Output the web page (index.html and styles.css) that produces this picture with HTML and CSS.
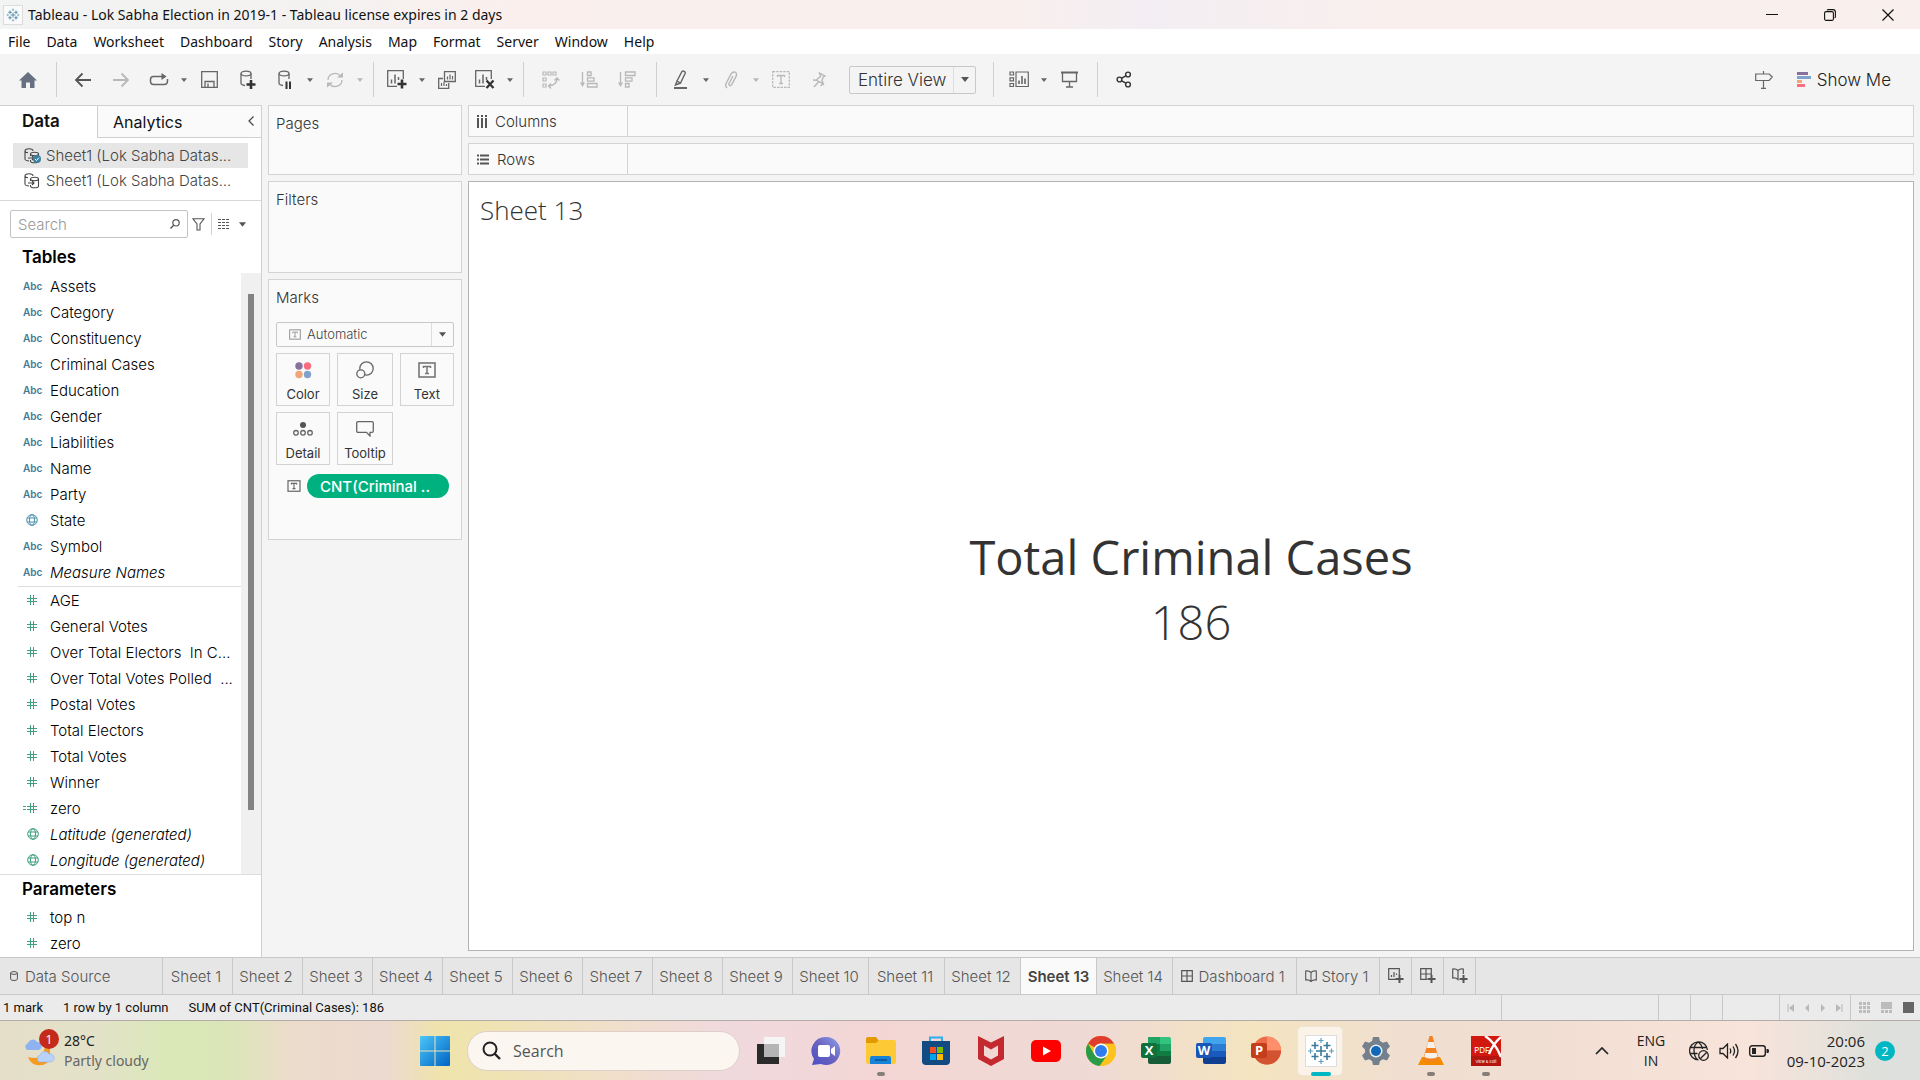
FILE: index.html
```html
<!DOCTYPE html>
<html lang="en">
<head>
<meta charset="utf-8">
<meta name="viewport" content="width=device-width, initial-scale=1">
<title>Tableau - Lok Sabha Election in 2019-1</title>
<link rel="stylesheet" href="styles.css">
</head>
<body>
<svg class="defs" aria-hidden="true">
  <symbol id="caret" viewBox="0 0 8 5"><path d="M0 0h8L4 5z" fill="currentColor"/></symbol>
  <symbol id="hash" viewBox="0 0 10 12"><path d="M3.5 1v10M6.5 1v10M0 4.5h10M0 7.5h10" stroke="currentColor" fill="none"/></symbol>
  <symbol id="globe" viewBox="0 0 12 12"><g stroke="currentColor" fill="none"><circle cx="6" cy="6" r="5.3"/><ellipse cx="6" cy="6" rx="2.5" ry="5.3"/><path d="M1 4h10M1 8h10"/></g></symbol>
  <symbol id="textbox" viewBox="0 0 18 16"><rect x="1" y="1" width="16" height="14" fill="none" stroke="currentColor" stroke-width="1.6"/><path d="M5.5 6V4.5h7V6M9 4.5v7M7 11.5h4" fill="none" stroke="currentColor" stroke-width="1.5"/></symbol>
  <symbol id="tableau" viewBox="0 0 28 28"><path d="M14 9v10M9 14h10M8 5v7M4.500 8.500h7M20 5v7M16.500 8.500h7M8 16v7M4.500 19.500h7M20 16v7M16.500 19.500h7" stroke="#3a7a9c" stroke-width="1.6"/><path d="M14 1v5M11.500 3.500h5M14 22v5M11.500 24.500h5M1 14h5M3.500 11.500v5M22 14h5M24.500 11.500v5" stroke="#5d9dc0" stroke-width="1.2"/></symbol>
  <symbol id="dsource" viewBox="0 0 16 16"><g fill="none" stroke="currentColor" stroke-width="1.1"><path d="M1 3v8c0 1 2 2 4 2M1 3c0-3 8-3 8 0M1 3c0 1 1 1.500 3 1.700"/><ellipse cx="10.500" cy="6" rx="4" ry="1.700"/><path d="M6.500 6v2M14.500 6v7c0 2.400-8 2.400-8 0v-1M4 10h6M8 8l2 2-2 2"/></g></symbol>
  <symbol id="grid4" viewBox="0 0 12 12"><path d="M.7.700h10.600v10.600H.7zM6 1v10M1 6h10" fill="none" stroke="currentColor" stroke-width="1.2"/></symbol>
  <symbol id="book" viewBox="0 0 12 12"><path d="M.7 1Q4 .5 6 2.500 8 .5 11.300 1v9Q8 9.500 6 11.500 4 9.500.7 10zM6 2.500v9" fill="none" stroke="currentColor" stroke-width="1.1"/></symbol>
</svg>

<header class="titlebar">
  <span class="app-mark"><svg width="14" height="14"><use href="#tableau"/></svg></span>
  <h1>Tableau - Lok Sabha Election in 2019-1 - Tableau license expires in 2 days</h1>
  <div class="window-controls">
    <button type="button" aria-label="Minimize"><svg width="12" height="12" viewBox="0 0 12 12"><path d="M0 5.500h12" stroke="#111"/></svg></button>
    <button type="button" aria-label="Restore"><svg width="12" height="12" viewBox="0 0 12 12"><rect x=".6" y="2.600" width="8.800" height="8.800" rx="1.500" fill="none" stroke="#111" stroke-width="1.100"/><path d="M3 1.200Q3.400.6 4.500.6H9q2.400 0 2.400 2.400v4.500q0 1.100-.8 1.500" fill="none" stroke="#111" stroke-width="1.100"/></svg></button>
    <button type="button" aria-label="Close"><svg width="12" height="12" viewBox="0 0 12 12"><path d="M.5.5l11 11M11.500.5l-11 11" stroke="#111" stroke-width="1.200"/></svg></button>
  </div>
</header>

<nav class="menubar" aria-label="Main menu">
  <a href="#file">File</a><a href="#data">Data</a><a href="#worksheet">Worksheet</a><a href="#dashboard">Dashboard</a><a href="#story">Story</a><a href="#analysis">Analysis</a><a href="#map">Map</a><a href="#format">Format</a><a href="#server">Server</a><a href="#window">Window</a><a href="#help">Help</a>
</nav>

<div class="toolbar" role="toolbar" aria-label="Tools">
  <div class="group home">
    <button type="button" class="tool" aria-label="Start page"><svg width="18" height="16" viewBox="0 0 18 16"><path d="M9 0l9 8.500h-2.500V16H11v-5.500H7V16H2.500V8.500H0z" fill="#667080"/></svg></button>
  </div>
  <div class="group nav">
    <button type="button" class="tool" aria-label="Undo"><svg width="18" height="16" viewBox="0 0 18 16"><path d="M17 8H2M8.500 1.500L2 8l6.500 6.500" fill="none" stroke="#555" stroke-width="1.800"/></svg></button>
    <button type="button" class="tool off" aria-label="Redo"><svg width="18" height="16" viewBox="0 0 18 16"><path d="M1 8h15M9.500 1.500L16 8l-6.500 6.500" fill="none" stroke="currentColor" stroke-width="1.800"/></svg></button>
    <button type="button" class="tool" aria-label="Replay"><svg width="20" height="16" viewBox="0 0 20 16"><path d="M8 12.500H4.500Q1.500 12.500 1.500 9V7.500q0-3 3-3h11" fill="none" stroke="currentColor" stroke-width="1.500"/><path d="M12 12.500h3q3.500 0 3.500-3.500V7M8 12.500h4" fill="none" stroke="currentColor" stroke-width="1.500"/><path d="M12.500 1l5 3.500-5 3.500z" fill="currentColor"/></svg></button>
    <button type="button" class="drop" aria-label="Replay options"><svg width="6" height="4"><use href="#caret"/></svg></button>
    <button type="button" class="tool" aria-label="Save"><svg width="17" height="17" viewBox="0 0 17 17"><path d="M.7.700h15.600v15.600H.7zM4 16v-5.500h9V16M7 12.500V16" fill="none" stroke="currentColor" stroke-width="1.300"/></svg></button>
    <button type="button" class="tool" aria-label="New data source"><svg width="17" height="20" viewBox="0 0 17 20"><g fill="none" stroke="currentColor" stroke-width="1.300"><ellipse cx="7" cy="3.500" rx="5" ry="2.400"/><path d="M2 3.500V13q0 2 4 2.500M12 3.500V9"/></g><path d="M12 10v9M7.500 14.500h9" stroke="#333" stroke-width="2.600"/></svg></button>
    <button type="button" class="tool" aria-label="Pause updates"><svg width="17" height="20" viewBox="0 0 17 20"><g fill="none" stroke="currentColor" stroke-width="1.300"><ellipse cx="7" cy="3.500" rx="5" ry="2.400"/><path d="M2 3.500V13q0 2 4 2.500M12 3.500V9"/></g><path d="M9.500 11.500v7.500M13 11.500v7.500" stroke="#333" stroke-width="2"/></svg></button>
    <button type="button" class="drop" aria-label="Update options"><svg width="6" height="4"><use href="#caret"/></svg></button>
    <button type="button" class="tool off" aria-label="Refresh"><svg width="18" height="16" viewBox="0 0 18 16"><path d="M2 8a7 6.500 0 0 1 12.500-4M16 8a7 6.500 0 0 1-12.500 4" fill="none" stroke="currentColor" stroke-width="1.300"/><path d="M11 5.500h6v-5zM7 10.500H1v5z" fill="currentColor"/></svg></button>
    <button type="button" class="drop off" aria-label="Refresh options"><svg width="6" height="4"><use href="#caret"/></svg></button>
  </div>
  <div class="group sheet-tools">
    <button type="button" class="tool" aria-label="New worksheet"><svg width="20" height="19" viewBox="0 0 20 19"><path d="M10 16.300H.7V.7h15.600V9" fill="none" stroke="currentColor" stroke-width="1.300"/><path d="M4.500 13.500v-4M8 13.500v-9M11.500 10V7" stroke="currentColor" stroke-width="1.500"/><path d="M15 9.500v9M10.500 14h9" stroke="#333" stroke-width="2.600"/></svg></button>
    <button type="button" class="drop" aria-label="New options"><svg width="6" height="4"><use href="#caret"/></svg></button>
    <button type="button" class="tool" aria-label="Duplicate"><svg width="18" height="18" viewBox="0 0 18 18"><path d="M6.500.7h10.800v9.800H6.500zM5 7.500H.7v9.800h10V12" fill="none" stroke="currentColor" stroke-width="1.300"/><path d="M9.500 8.500v-3M12 8.500v-5M14.500 8.500V5M3.500 15v-3M6 15v-4M8.500 15v-2" stroke="currentColor" stroke-width="1.200"/></svg></button>
    <button type="button" class="tool" aria-label="Clear sheet"><svg width="20" height="19" viewBox="0 0 20 19"><path d="M10 16.300H.7V.7h15.600V9" fill="none" stroke="currentColor" stroke-width="1.300"/><path d="M4.500 13.500v-4M8 13.500v-9M11.500 10V7" stroke="currentColor" stroke-width="1.500"/><path d="M11.500 10.500l7 7.500M18.500 10.500l-7 7.500" stroke="#333" stroke-width="2.300"/></svg></button>
    <button type="button" class="drop" aria-label="Clear options"><svg width="6" height="4"><use href="#caret"/></svg></button>
  </div>
  <div class="group sort">
    <button type="button" class="tool off" aria-label="Swap rows and columns"><svg width="18" height="18" viewBox="0 0 18 18"><path d="M1 1h3v3H1zM6 1h3v3H6zM11 1h3v3h-3zM1 7h3v3H1zM1 13h3v3H1z" fill="none" stroke="currentColor" stroke-width="1.200"/><path d="M15 7.500q0 6.500-8 7.500M12.500 9.500L15 7l2.500 2.500M9 12.500L6.500 15 9 17.500" fill="none" stroke="currentColor" stroke-width="1.300"/></svg></button>
    <button type="button" class="tool off" aria-label="Sort ascending"><svg width="18" height="17" viewBox="0 0 18 17"><path d="M7.500 1H11v3.500H7.500zM7.500 6.800H14v3.400H7.500zM7.500 12.500H17V16H7.500z" fill="none" stroke="currentColor" stroke-width="1.300"/><path d="M2.500 1v12" stroke="currentColor" stroke-width="1.300"/><path d="M0 11.500h5L2.500 16z" fill="currentColor"/></svg></button>
    <button type="button" class="tool off" aria-label="Sort descending"><svg width="18" height="17" viewBox="0 0 18 17"><path d="M7.500 1H17v3.500H7.500zM7.500 6.800H14v3.400H7.500zM7.500 12.500H11V16H7.500z" fill="none" stroke="currentColor" stroke-width="1.300"/><path d="M2.500 1v12" stroke="currentColor" stroke-width="1.300"/><path d="M0 11.500h5L2.500 16z" fill="currentColor"/></svg></button>
  </div>
  <div class="group marks-tools">
    <button type="button" class="tool" aria-label="Highlight"><svg width="16" height="20" viewBox="0 0 16 20"><path d="M4 11l5-9.500q1-1 2.300-.2t.9 2L7.500 13zM4 11l-1.500 4 5-2" fill="none" stroke="currentColor" stroke-width="1.400"/><path d="M1 18h13" stroke="currentColor" stroke-width="2"/></svg></button>
    <button type="button" class="drop" aria-label="Highlight options"><svg width="6" height="4"><use href="#caret"/></svg></button>
    <button type="button" class="tool off" aria-label="Group members"><svg width="16" height="18" viewBox="0 0 16 18"><path d="M10 5l-4 7.500q-.5 1.500.7 2t2-.8l4.500-8.500q1-3-1-4t-4 1.500l-5 9.500q-1.500 3.500 1 4.800" fill="none" stroke="currentColor" stroke-width="1.400"/></svg></button>
    <button type="button" class="drop off" aria-label="Group options"><svg width="6" height="4"><use href="#caret"/></svg></button>
    <button type="button" class="tool off" aria-label="Show mark labels"><svg width="18" height="17" viewBox="0 0 18 17"><rect x=".7" y=".7" width="16.600" height="15.600" fill="none" stroke="currentColor" stroke-width="1.200" stroke-dasharray="2.500 1"/><path d="M5.500 6V4.500h7V6M9 4.500v8M7 12.500h4" fill="none" stroke="currentColor" stroke-width="1.300"/></svg></button>
    <button type="button" class="tool off" aria-label="Fix axes"><svg width="14" height="16" viewBox="0 0 14 16"><path d="M7.500 1l5.500 3-1.700.7-1.300 3.800 1.200 3.200-6.700-3.400.9-1.300 3.300-2.800zM4.500 8.300L1 8M11.200 11.700L8.500 14M6.500 10L2 15" fill="none" stroke="currentColor" stroke-width="1.400"/></svg></button>
    <div class="picker fit">
      <select aria-label="Fit"><option>Entire View</option></select>
      <span class="arrow"><svg width="8" height="5"><use href="#caret"/></svg></span>
    </div>
  </div>
  <div class="group view-tools">
    <button type="button" class="tool" aria-label="Show/Hide cards"><svg width="20" height="17" viewBox="0 0 20 17"><path d="M1 1h3.500v3H1zM1 6.800h3.500v3H1zM1 12.500h3.500v3H1zM7 1h12.300v14.500H7z" fill="none" stroke="currentColor" stroke-width="1.200"/><path d="M10 13V9.500M13 13V5M16 13V7.500" stroke="currentColor" stroke-width="1.600"/></svg></button>
    <button type="button" class="drop" aria-label="Card options"><svg width="6" height="4"><use href="#caret"/></svg></button>
    <button type="button" class="tool" aria-label="Presentation mode"><svg width="17" height="17" viewBox="0 0 17 17"><path d="M0 1.500h17" stroke="currentColor" stroke-width="2"/><path d="M1.500 2v8.500h14V2M8.500 10.500V16M5 16h7" fill="none" stroke="currentColor" stroke-width="1.300"/></svg></button>
  </div>
  <div class="group share">
    <button type="button" class="tool" aria-label="Share"><svg width="16" height="17" viewBox="0 0 16 17"><g fill="none" stroke="#333" stroke-width="1.400"><circle cx="3.500" cy="8.500" r="2.400"/><circle cx="12" cy="3.500" r="2.400"/><circle cx="12" cy="13.500" r="2.400"/><path d="M5.800 7.200l4-2.400M5.800 9.800l4 2.400"/></g></svg></button>
  </div>
  <div class="toolbar-end">
    <button type="button" class="guide" aria-label="Guided help"><svg width="18" height="18" viewBox="0 0 18 18"><path d="M.7 3h13.500L17.300 6l-3.100 3.500H.7zM8.500 0v3M8.500 9.500V17M6 17.300h5" fill="none" stroke="#666" stroke-width="1.200"/></svg></button>
    <button type="button" class="show-me"><svg width="14" height="15" viewBox="0 0 14 15"><path d="M0 0h11v3H0z" fill="#87709a"/><path d="M0 4h14v3H0z" fill="#7fa3cb"/><path d="M0 8h5v3H0z" fill="#f0a57a"/><path d="M0 12h8v3H0z" fill="#fa6c80"/></svg>Show Me</button>
  </div>
</div>

<main class="workspace">
  <aside class="data-pane">
    <div class="pane-tabs">
      <button type="button" class="pane-tab current">Data</button>
      <button type="button" class="pane-tab">Analytics</button>
      <button type="button" class="collapse" aria-label="Collapse pane"><svg width="6" height="10" viewBox="0 0 6 10"><path d="M5.500.5L1 5l4.500 4.500" fill="none" stroke="#444" stroke-width="1.200"/></svg></button>
    </div>
    <ul class="sources">
      <li class="selected"><svg width="16" height="16"><use href="#dsource"/></svg><svg class="tick" width="8" height="8" viewBox="0 0 8 8"><circle cx="4" cy="4" r="4" fill="#3b7fa3"/><path d="M2 4l1.500 1.500L6 2.700" stroke="#fff" fill="none"/></svg>Sheet1 (Lok Sabha Datas...</li>
      <li><svg width="16" height="16"><use href="#dsource"/></svg>Sheet1 (Lok Sabha Datas...</li>
    </ul>
    <div class="find">
      <label class="find-box"><input type="text" placeholder="Search" aria-label="Search fields"><svg width="10" height="10" viewBox="0 0 10 10"><circle cx="6" cy="3.800" r="3.200" fill="none" stroke="#555" stroke-width="1.200"/><path d="M3.700 6.200L.5 9.500" stroke="#555" stroke-width="1.400"/></svg></label>
      <button type="button" class="filter" aria-label="Filter fields"><svg width="13" height="13" viewBox="0 0 13 13"><path d="M.8.7h11.400L8 6v6H5V6z" fill="none" stroke="#555" stroke-width="1.100"/></svg></button>
      <button type="button" class="view-as" aria-label="View options"><svg width="12" height="10" viewBox="0 0 12 10"><path d="M0 .5h12M0 3.500h12M0 6.500h12M0 9.500h12" stroke="#555" stroke-dasharray="3 1"/></svg><svg width="7" height="5"><use href="#caret"/></svg></button>
    </div>
    <h2>Tables</h2>
    <div class="field-area">
      <div class="field-list">
        <ul class="fields dims">
          <li><b>Abc</b>Assets</li>
          <li><b>Abc</b>Category</li>
          <li><b>Abc</b>Constituency</li>
          <li><b>Abc</b>Criminal Cases</li>
          <li><b>Abc</b>Education</li>
          <li><b>Abc</b>Gender</li>
          <li><b>Abc</b>Liabilities</li>
          <li><b>Abc</b>Name</li>
          <li><b>Abc</b>Party</li>
          <li><span class="glyph"><svg width="12" height="12"><use href="#globe"/></svg></span>State</li>
          <li><b>Abc</b>Symbol</li>
          <li><b>Abc</b><i>Measure Names</i></li>
        </ul>
        <ul class="fields measures">
          <li><span class="glyph"><svg width="10" height="12"><use href="#hash"/></svg></span>AGE</li>
          <li><span class="glyph"><svg width="10" height="12"><use href="#hash"/></svg></span>General Votes</li>
          <li><span class="glyph"><svg width="10" height="12"><use href="#hash"/></svg></span>Over Total Electors  In C...</li>
          <li><span class="glyph"><svg width="10" height="12"><use href="#hash"/></svg></span>Over Total Votes Polled  ...</li>
          <li><span class="glyph"><svg width="10" height="12"><use href="#hash"/></svg></span>Postal Votes</li>
          <li><span class="glyph"><svg width="10" height="12"><use href="#hash"/></svg></span>Total Electors</li>
          <li><span class="glyph"><svg width="10" height="12"><use href="#hash"/></svg></span>Total Votes</li>
          <li><span class="glyph"><svg width="10" height="12"><use href="#hash"/></svg></span>Winner</li>
          <li><span class="glyph calc"><svg width="14" height="12" viewBox="0 0 14 12"><path d="M0 4.500h3M0 7.500h3M7.500 1v10M10.500 1v10M4 4.500h10M4 7.500h10" stroke="currentColor"/></svg></span>zero</li>
          <li><span class="glyph"><svg width="12" height="12"><use href="#globe"/></svg></span><i>Latitude (generated)</i></li>
          <li><span class="glyph"><svg width="12" height="12"><use href="#globe"/></svg></span><i>Longitude (generated)</i></li>
        </ul>
      </div>
      <div class="track"><div class="thumb"></div></div>
    </div>
    <div class="params">
      <h2>Parameters</h2>
      <ul class="fields measures">
        <li><span class="glyph"><svg width="10" height="12"><use href="#hash"/></svg></span>top n</li>
        <li><span class="glyph"><svg width="10" height="12"><use href="#hash"/></svg></span>zero</li>
      </ul>
    </div>
  </aside>

  <section class="cards">
    <div class="card pages"><h3>Pages</h3></div>
    <div class="card filters"><h3>Filters</h3></div>
    <div class="card marks">
      <h3>Marks</h3>
      <div class="picker mark-type">
        <svg class="lead" width="12" height="11"><use href="#textbox"/></svg>
        <select aria-label="Mark type"><option>Automatic</option></select>
        <span class="arrow"><svg width="7" height="5"><use href="#caret"/></svg></span>
      </div>
      <div class="mark-grid">
        <button type="button"><svg width="18" height="18" viewBox="0 0 18 18"><circle cx="5" cy="5" r="3.700" fill="#87709a"/><circle cx="13.500" cy="5" r="3.700" fill="#fa6c80"/><circle cx="5" cy="13.500" r="3.700" fill="#f0a57a"/><circle cx="13.500" cy="13.500" r="3.700" fill="#7fa3cb"/></svg>Color</button>
        <button type="button"><svg width="18" height="18" viewBox="0 0 18 18"><circle cx="10.500" cy="7.500" r="6.700" fill="none" stroke="#666" stroke-width="1.300"/><circle cx="4.800" cy="12.800" r="4" fill="#fafafa" stroke="#666" stroke-width="1.300"/></svg>Size</button>
        <button type="button"><svg width="18" height="16"><use href="#textbox"/></svg>Text</button>
        <button type="button"><svg width="20" height="14" viewBox="0 0 20 14"><circle cx="10" cy="3" r="3" fill="#555"/><g fill="none" stroke="#666" stroke-width="1.300"><circle cx="3" cy="10.800" r="2.300"/><circle cx="10" cy="10.800" r="2.300"/><circle cx="17" cy="10.800" r="2.300"/></g></svg>Detail</button>
        <button type="button"><svg width="18" height="16" viewBox="0 0 18 16"><path d="M2 .7h14q1.300 0 1.300 1.300v8q0 1.300-1.300 1.300h-2V15l-3.500-3.700H2Q.7 11.300.7 10V2Q.7.700 2 .7z" fill="none" stroke="#666" stroke-width="1.300"/></svg>Tooltip</button>
      </div>
      <div class="mark-field"><svg width="14" height="12"><use href="#textbox"/></svg><button type="button" class="pill">CNT(Criminal ..</button></div>
    </div>
  </section>

  <section class="sheet">
    <div class="shelf"><div class="shelf-name"><svg width="10" height="13" viewBox="0 0 10 13"><path d="M1 0v2M5 0v2M9 0v2M1 3v10M5 3v10M9 3v10" stroke="#555" stroke-width="2"/></svg>Columns</div></div>
    <div class="shelf"><div class="shelf-name"><svg width="12" height="11" viewBox="0 0 12 11"><path d="M0 1.500h2M3 1.500h9M0 5.500h2M3 5.500h9M0 9.500h2M3 9.500h9" stroke="#555" stroke-width="2"/></svg>Rows</div></div>
    <div class="canvas">
      <h2>Sheet 13</h2>
      <div class="view"><p class="measure">Total Criminal Cases</p><p class="value">186</p></div>
    </div>
  </section>
</main>

<nav class="sheet-tabs" aria-label="Sheets">
  <a class="source" href="#source"><svg width="8" height="10" viewBox="0 0 8 10"><path d="M.6 2v6q0 1.500 3.400 1.500T7.400 8V2Q7.400.6 4 .6T.6 2q0 1.400 3.400 1.400T7.400 2" fill="none" stroke="currentColor"/></svg>Data Source</a>
  <a href="#s1">Sheet 1</a><a href="#s2">Sheet 2</a><a href="#s3">Sheet 3</a><a href="#s4">Sheet 4</a><a href="#s5">Sheet 5</a><a href="#s6">Sheet 6</a><a href="#s7">Sheet 7</a><a href="#s8">Sheet 8</a><a href="#s9">Sheet 9</a>
  <a class="wide" href="#s10">Sheet 10</a><a class="wide" href="#s11">Sheet 11</a><a class="wide" href="#s12">Sheet 12</a><a class="wide current" href="#s13" aria-current="page">Sheet 13</a><a class="wide" href="#s14">Sheet 14</a>
  <a class="dash" href="#d1"><svg width="12" height="12"><use href="#grid4"/></svg>Dashboard 1</a>
  <a class="story" href="#st1"><svg width="12" height="12"><use href="#book"/></svg>Story 1</a>
  <button type="button" aria-label="New worksheet"><svg width="16" height="16" viewBox="0 0 16 16"><path d="M8 11.300H.7V.7h10.600V7M3.500 9V7M6 9V4M8.500 7V5.500" fill="none" stroke="currentColor" stroke-width="1.200"/><path d="M11.500 7v8M7.500 11h8" stroke="#555" stroke-width="2"/></svg></button>
  <button type="button" aria-label="New dashboard"><svg width="16" height="16" viewBox="0 0 16 16"><path d="M7 11.300H.7V.7h10.600V7M6 1v10M1 6h10" fill="none" stroke="currentColor" stroke-width="1.200"/><path d="M11.500 7v8M7.500 11h8" stroke="#555" stroke-width="2"/></svg></button>
  <button type="button" aria-label="New story"><svg width="16" height="16" viewBox="0 0 16 16"><path d="M11.300 6V1Q8 .5 6 2.500 4 .5.7 1v9q3.300-.5 5.300 1.500v-9" fill="none" stroke="currentColor" stroke-width="1.200"/><path d="M11.500 7v8M7.500 11h8" stroke="#555" stroke-width="2"/></svg></button>
</nav>

<div class="statusbar">
  <span>1 mark</span><span>1 row by 1 column</span><span>SUM of CNT(Criminal Cases): 186</span>
  <div class="status-cells">
    <div class="cell"></div><div class="cell small"></div><div class="cell small"></div><div class="cell mid"></div>
    <div class="cell pager">
      <button type="button" aria-label="First sheet"><svg width="8" height="8" viewBox="0 0 8 8"><path d="M1 0v8" stroke="currentColor"/><path d="M7 0v8L2 4z" fill="currentColor"/></svg></button>
      <button type="button" aria-label="Previous sheet"><svg width="8" height="8" viewBox="0 0 8 8"><path d="M6 0v8L2 4z" fill="currentColor"/></svg></button>
      <button type="button" aria-label="Next sheet"><svg width="8" height="8" viewBox="0 0 8 8"><path d="M2 0v8l4-4z" fill="currentColor"/></svg></button>
      <button type="button" aria-label="Last sheet"><svg width="8" height="8" viewBox="0 0 8 8"><path d="M7 0v8" stroke="currentColor"/><path d="M1 0v8l5-4z" fill="currentColor"/></svg></button>
    </div>
    <div class="cell modes">
      <button type="button" aria-label="Sheet sorter"><svg width="11" height="11" viewBox="0 0 11 11"><path d="M0 1.500h11M0 5.500h11M0 9.500h11" stroke="#bcbcbc" stroke-width="3" stroke-dasharray="3 1"/></svg></button>
      <button type="button" aria-label="Filmstrip"><svg width="11" height="11" viewBox="0 0 11 11"><path d="M0 0h11v7H0z" fill="#bcbcbc"/><path d="M0 9.500h11" stroke="#bcbcbc" stroke-width="3" stroke-dasharray="3 1"/></svg></button>
      <button type="button" aria-label="Tabs"><svg width="11" height="11" viewBox="0 0 11 11"><path d="M0 0h11v11H0z" fill="#666"/></svg></button>
    </div>
  </div>
</div>

<footer class="taskbar">
  <button type="button" class="weather">
    <svg width="36" height="36" viewBox="0 0 36 36" aria-hidden="true"><path d="M5 24a12 12 0 0 0 22 2V14q-5-1-6 3-1 8-9 8-4 0-7-1z" fill="#f59b22"/><path d="M4 17a4 4 0 0 1 1-7 5 5 0 0 1 9-1 4 4 0 0 1 1 8z" fill="#8fb3f0"/><path d="M16 29a4 4 0 0 1 1-7 5 5 0 0 1 9-1 4 4 0 0 1 2 8z" fill="#b8d2fa" stroke="#8fb1e8" stroke-width=".6"/></svg>
    <span class="alert">1</span>
    <span class="forecast"><span>28°C</span><span class="sky">Partly cloudy</span></span>
  </button>

  <div class="apps">
    <button type="button" class="app" aria-label="Start"><svg width="30" height="30" viewBox="0 0 30 30"><defs><linearGradient id="win" x1="0" y1="0" x2="1" y2="1"><stop offset="0" stop-color="#4cc6f8"/><stop offset="1" stop-color="#0063c4"/></linearGradient></defs><path d="M1 0h13.500v14.500H0V1q0-1 1-1zM15.500 0H29q1 0 1 1v13.500H15.500zM0 15.500h14.500V30H1q-1 0-1-1zM15.500 15.500H30V29q0 1-1 1H15.500z" fill="url(#win)"/></svg></button>
    <label class="task-search"><svg width="19" height="19" viewBox="0 0 19 19"><circle cx="8" cy="8" r="6.500" fill="none" stroke="#222" stroke-width="2"/><path d="M12.500 12.500l5.500 5.500" stroke="#222" stroke-width="2.400"/></svg><input type="text" placeholder="Search" aria-label="Search Windows"></label>
    <button type="button" class="app" aria-label="Task view"><svg width="30" height="30" viewBox="0 0 30 30"><path d="M1 8h22v20H1z" fill="#2b2b2b"/><path d="M8 1h21v20H8z" fill="#f5f5f5"/><path d="M8 8h15v13H8z" fill="#b5b5b5"/></svg></button>
    <button type="button" class="app" aria-label="Chat"><svg width="30" height="30" viewBox="0 0 30 30"><defs><linearGradient id="chat" x1="0" y1="1" x2="1" y2="0"><stop offset="0" stop-color="#4a4fc4"/><stop offset=".5" stop-color="#6a63c0"/><stop offset="1" stop-color="#8fa0e8"/></linearGradient></defs><path d="M15 1a14 14 0 1 1-5 27l-9 1 2-6A14 14 0 0 1 15 1z" fill="url(#chat)"/><rect x="7" y="9" width="12" height="12" rx="2" fill="#fff"/><path d="M20 13l4-3v10l-4-3z" fill="#fff"/></svg></button>
    <button type="button" class="app running" aria-label="File Explorer"><svg width="30" height="30" viewBox="0 0 30 30"><path d="M0 3q0-2 2-2h8l3 4v5H0z" fill="#e29a00"/><path d="M0 7h10l3-3h15q2 0 2 2v20q0 2-2 2H2q-2 0-2-2z" fill="#fdc934"/><path d="M4 28v-6q0-2 2-2h17q2 0 2 2v6z" fill="#1783d8"/><path d="M9 24h12" stroke="#0b4f94" stroke-width="1.500"/></svg></button>
    <button type="button" class="app" aria-label="Microsoft Store"><svg width="30" height="30" viewBox="0 0 30 30"><path d="M9 7V1.500h12V7" fill="none" stroke="#2ab0f0" stroke-width="2"/><path d="M1 5h28v20q0 4-4 4H5q-4 0-4-4z" fill="#124a82"/><path d="M9 11h6v6H9z" fill="#f25022"/><path d="M16 11h6v6h-6z" fill="#7fba00"/><path d="M9 18h6v6H9z" fill="#00a4ef"/><path d="M16 18h6v6h-6z" fill="#ffb900"/></svg></button>
    <button type="button" class="app" aria-label="McAfee"><svg width="28" height="30" viewBox="0 0 28 30"><path d="M1 0l13 6.500L27 0v23l-13 7L1 23zM7 9.500v10l7 4 7-4v-10l-7 4z" fill="#c4292f" fill-rule="evenodd"/></svg></button>
    <button type="button" class="app" aria-label="YouTube"><svg width="30" height="22" viewBox="0 0 30 22"><rect width="30" height="22" rx="5" fill="#f00"/><path d="M12 6.500l8 4.500-8 4.500z" fill="#fff"/></svg></button>
    <button type="button" class="app" aria-label="Chrome"><svg width="30" height="30" viewBox="0 0 30 30"><circle cx="15" cy="15" r="15" fill="#fcc31e"/><path d="M15 7.500h13L21.500 19 13.500 30A15 15 0 0 1 2 7.500l6.500 11.200z" fill="#2a9b47"/><path d="M15 7.500h13A15 15 0 0 1 14.200 30l7.300-11.200z" fill="#fcc31e"/><path d="M2 7.500A15 15 0 0 1 28 7.500H15a7.500 7.500 0 0 0-6.500 3.800z" fill="#df3d30"/><circle cx="15" cy="15" r="7.500" fill="#fff"/><circle cx="15" cy="15" r="6" fill="#2f7cec"/></svg></button>
    <button type="button" class="app" aria-label="Excel"><svg width="30" height="29" viewBox="0 0 30 29"><path d="M7 1h12v7H7z" fill="#21a366"/><path d="M19 1h9q2 0 2 2v5H19z" fill="#33c481"/><path d="M7 8h12v13H7z" fill="#107c41"/><path d="M19 8h11v7H19z" fill="#21a366"/><path d="M19 15h11v7H19z" fill="#107c41"/><path d="M7 20h23v6q0 2-2 2H9q-2 0-2-2z" fill="#185c37"/><rect y="7" width="16" height="15" rx="2" fill="#10703b"/><text x="8" y="19" class="letter">X</text></svg></button>
    <button type="button" class="app" aria-label="Word"><svg width="30" height="29" viewBox="0 0 30 29"><path d="M7 8V3q0-2 2-2h19q2 0 2 2v5z" fill="#41a5ee"/><path d="M7 8h23v7H7z" fill="#2b7cd3"/><path d="M7 15h23v6H7z" fill="#185abd"/><path d="M7 21h23v5q0 2-2 2H9q-2 0-2-2z" fill="#103f91"/><rect y="7" width="16" height="15" rx="2" fill="#1a56b8"/><text x="8" y="19" class="letter">W</text></svg></button>
    <button type="button" class="app" aria-label="PowerPoint"><svg width="30" height="29" viewBox="0 0 30 29"><circle cx="16" cy="14.500" r="14" fill="#ed6c47"/><path d="M16 .5a14 14 0 0 1 14 14H16z" fill="#ff8f6b"/><path d="M2 14.500h28a14 14 0 0 1-28 0z" fill="#d35230"/><rect y="7" width="16" height="15" rx="2" fill="#c43e1c"/><text x="8" y="19" class="letter">P</text></svg></button>
    <button type="button" class="app active" aria-label="Tableau"><span class="tile"><svg width="28" height="28"><use href="#tableau"/></svg></span></button>
    <button type="button" class="app" aria-label="Settings"><svg width="30" height="30" viewBox="0 0 30 30"><path d="M12 1h6l1 4 3 1.700 4-1.200 3 5-3 3v3l3 3-3 5-4-1.200L19 25l-1 4h-6l-1-4-3-1.700-4 1.200-3-5 3-3v-3l-3-3 3-5 4 1.200L11 5z" fill="#74808c"/><circle cx="15" cy="15" r="6.500" fill="#e8eef5"/><circle cx="15" cy="15" r="5" fill="#1267b8"/></svg></button>
    <button type="button" class="app running" aria-label="VLC"><svg width="26" height="30" viewBox="0 0 26 30"><path d="M4 21h18l4 8H0z" fill="#f48b00"/><path d="M11.500 0h3L21 24q-8 4-16 0z" fill="#f58220"/><path d="M10 6h6l1.500 6h-9zM7.300 17h11.400l1 4q-7 3-13.400 0z" fill="#f6f1ea"/></svg></button>
    <button type="button" class="app running" aria-label="PDF viewer"><svg width="30" height="30" viewBox="0 0 30 30"><path d="M0 0h30v30H0z" fill="#d3190f"/><path d="M0 20h30v10H0z" fill="#b5140f"/><path d="M14 0q10 6 16 21M30 1Q22 8 18 18" fill="none" stroke="#fff" stroke-width="2.400"/><text x="11" y="17" class="pdf">PDF</text><text x="15" y="27" class="pdf-sub">View &amp; Edit</text></svg></button>
  </div>

  <div class="tray">
    <button type="button" class="more" aria-label="Hidden icons"><svg width="14" height="8" viewBox="0 0 14 8"><path d="M1 7l6-6 6 6" fill="none" stroke="#222" stroke-width="1.700"/></svg></button>
    <button type="button" class="lang"><span>ENG</span><span>IN</span></button>
    <button type="button" class="quick" aria-label="Network, volume, battery">
      <svg width="20" height="20" viewBox="0 0 20 20"><g fill="none" stroke="#222" stroke-width="1.300"><path d="M9.500 18.800A9 9 0 1 1 18.500 9M9 19q-4-3-4-9.500T9.500 1M9.500 1q3.500 3 4 7M1.500 6.500h16M1.500 12.500h7"/><circle cx="14.500" cy="14.500" r="4.800"/><path d="M11.200 17.800l6.600-6.600"/></g></svg>
      <svg width="20" height="16" viewBox="0 0 20 16"><path d="M1 5.500h3L8.500 1v14L4 10.500H1zM11 5.500q1.500 2.500 0 5M14 3.500q3 4.500 0 9M16.500 1q5 7 0 14" fill="none" stroke="#222" stroke-width="1.300"/></svg>
      <svg width="20" height="12" viewBox="0 0 20 12"><rect x=".7" y=".7" width="15.600" height="10.600" rx="2.500" fill="none" stroke="#222" stroke-width="1.400"/><path d="M3 3h4v6H3z" fill="#222"/><path d="M17.500 4H19q1 0 1 2t-1 2h-1.500z" fill="#222"/></svg>
    </button>
    <button type="button" class="clock"><span>20:06</span><span>09-10-2023</span></button>
    <span class="count">2</span>
  </div>
</footer>
</body>
</html>
```
FILE: styles.css
```css
* { box-sizing: border-box; }

body {
  margin: 0;
  min-height: 100vh;
  display: flex;
  flex-direction: column;
  background: #f4f4f4;
  color: #111;
  font-family: Inter, "Liberation Sans", sans-serif;
  font-size: 15px;
}

h1, h2, h3, p, ul { margin: 0; padding: 0; font-weight: 400; }
ul { list-style: none; }
svg { display: block; flex: none; }
a { color: inherit; text-decoration: none; }
button { margin: 0; padding: 0; border: 0; background: none; color: inherit; font: inherit; }
input, select { margin: 0; border: 0; background: none; color: inherit; font: inherit; outline: 0; }
.defs { position: absolute; width: 0; height: 0; }

/* Window title */
.titlebar {
  display: flex;
  align-items: center;
  height: 29px;
  padding-left: 3px;
  gap: 5px;
  background: linear-gradient(90deg, #f2f3f3, #f4f2f1 320px, #faefed 520px, #f9efed 1000px, #f3eef3 1150px, #f9efed 1400px);
}
.titlebar h1, .menubar { font: 14px "Noto Sans", "Open Sans", sans-serif; }
.app-mark { padding: 2px; background: #fafafa; border: 1px solid #dcdcdc; }
.window-controls { display: flex; margin-left: auto; padding-right: 3px; }
.window-controls button { width: 58px; display: grid; place-items: center; }

.menubar { display: flex; align-items: center; gap: 16px; height: 25px; padding-left: 8px; background: #fff; }

/* Toolbar */
.toolbar { display: flex; align-items: center; height: 51px; color: #666; }
.group { display: flex; align-items: center; height: 35px; border-right: 1px solid #d0d0d0; }
.tool { width: 38px; height: 28px; display: grid; place-items: center; }
.drop { width: 12px; height: 28px; display: grid; place-items: center; }
.off { color: #b8b8b8; }
.home { padding: 0 9px; }
.nav { padding: 0 7px; }
.sheet-tools { padding: 0 7px 0 4px; }
.sort { padding: 0 10px 0 8px; }
.marks-tools { padding: 0 17px 0 5px; }
.view-tools { padding: 0 9px 0 6px; }
.share { padding-left: 7px; border: 0; }
.toolbar-end { display: flex; align-items: center; gap: 24px; margin-left: auto; padding-right: 29px; }
.show-me { display: flex; align-items: center; gap: 7px; font: 300 17px Roboto, sans-serif; font-size: 17px; color: #222; }

.picker { position: relative; display: flex; border: 1px solid #c8c8c8; border-radius: 2px; }
.picker select { flex: 1; width: 100%; appearance: none; }
.picker .arrow {
  position: absolute;
  inset: 0 0 0 auto;
  width: 22px;
  display: grid;
  place-items: center;
  border-left: 1px solid #ddd;
  color: #555;
  pointer-events: none;
}
.fit { width: 127px; height: 28px; margin-left: 11px; }
.fit select { padding: 0 0 0 8px; font-size: 17px; font-weight: 300; color: #333; }
.toolbar .show-me { font: 300 17px Inter, sans-serif; gap: 6px; }

/* Main area */
.workspace { flex: 1; display: flex; gap: 6px; padding-right: 6px; }
.data-pane {
  width: 262px;
  display: flex;
  flex-direction: column;
  border-top: 1px solid #d0d0d0;
  border-right: 1px solid #d0d0d0;
  background: #fff;
}
.data-pane h2 { padding: 0 0 2px 22px; font-size: 17px; font-weight: 600; line-height: 28px; color: #000; }
.pane-tabs { display: flex; height: 32px; }
.pane-tab { flex: 1; padding: 0 0 0 15px; text-align: left; font-size: 16px; border: solid #d0d0d0; border-width: 0 0 1px 1px; background: #fafafa; }
.pane-tab.current { flex: 0 0 97px; padding: 0 0 2px 22px; border: 0; background: #fff; font-size: 17px; font-weight: 600; }
.collapse { padding: 0 7px 2px; border-bottom: 1px solid #d0d0d0; background: #fafafa; }
.sources { padding: 5px 13px 7px; border-bottom: 1px solid #d8d8d8; font-weight: 300; }
.sources li { position: relative; display: flex; align-items: center; gap: 6px; height: 25px; padding-left: 11px; color: #444; }
.sources .selected { background: #e6e6e6; }
.tick { position: absolute; left: 20px; bottom: 5px; }

.find { display: flex; align-items: center; padding: 9px 10px 5px; }
.find-box { display: flex; align-items: center; width: 178px; height: 28px; padding: 0 7px; border: 1px solid #c4c4c4; border-radius: 2px; }
.find-box input { flex: 1; min-width: 0; padding: 0; font-weight: 300; }
.find-box input::placeholder { color: #999; opacity: 1; }
.filter { padding: 0 6px 0 4px; }
.view-as { display: flex; align-items: center; gap: 9px; height: 22px; padding-left: 6px; border-left: 1px solid #d0d0d0; color: #555; }

.field-area { display: grid; grid-template-columns: 1fr 20px; }
.field-list { padding-top: 1px; }
.fields li { display: flex; align-items: center; height: 26px; padding: 0 0 2px 24px; white-space: pre; font-weight: 300; color: #000; }
.fields b { width: 27px; font-size: 10px; font-weight: 600; color: #3f7b95; }
.fields.dims li { padding-left: 23px; }
.glyph { width: 26px; padding-left: 3px; color: #3f9f7f; }
.dims .glyph { width: 27px; color: #4a8fae; }
.calc { padding-left: 0; margin-left: -1px; width: 27px; }
.field-list .measures { border-top: 1px solid #ddd; margin-left: 18px; padding-top: 1px; }
.field-list .measures li { padding-left: 6px; }
.track { padding: 21px 7px 64px; background: #f0f0f0; }
.thumb { height: 100%; background: #838383; }
.params { border-top: 1px solid #ddd; height: 83px; overflow: hidden; }

.cards { width: 194px; display: flex; flex-direction: column; gap: 6px; }
.card { padding: 8px 7px; border: 1px solid #d3d3d3; background: #fafafa; color: #333; }
.card h3 { font-size: 15px; font-weight: 300; line-height: 20px; }
.pages { height: 70px; }
.filters { height: 92px; }
.marks { height: 261px; }
.mark-type { height: 25px; margin-top: 14px; align-items: center; padding-left: 12px; color: #999; }
.mark-type select { padding: 0 0 1px 6px; font-size: 13px; font-weight: 300; color: #444; }
.mark-grid { display: grid; grid-template-columns: 54px 56px 54px; justify-content: space-between; gap: 6px 0; margin-top: 6px; }
.mark-grid button {
  display: grid;
  grid-template-rows: 20px 16px;
  align-content: center;
  place-items: center;
  gap: 6px;
  height: 53px;
  padding-top: 2px;
  border: 1px solid #d3d3d3;
  color: #333;
  font-size: 13px;
}
.mark-grid svg { color: #777; }
.mark-field { display: flex; align-items: center; gap: 6px; margin: 9px 0 0 11px; color: #666; }
.pill { width: 142px; height: 24px; padding-left: 13px; border-radius: 12px; background: #00b180; color: #fff; text-align: left; font-size: 15px; font-weight: 500; }

.sheet { flex: 1; display: flex; flex-direction: column; gap: 6px; padding-bottom: 6px; }
.shelf { height: 32px; border: 1px solid #d3d3d3; background: #fafafa; display: flex; }
.shelf-name { width: 159px; display: flex; align-items: center; gap: 8px; padding-left: 8px; border-right: 1px solid #d3d3d3; font-weight: 300; color: #333; }
.canvas { flex: 1; display: flex; flex-direction: column; border: 1px solid #b3b3b3; background: #fff; font-family: "Open Sans", "Noto Sans", sans-serif; color: #333; }
.canvas h2 { padding: 12px 11px; font-size: 26px; font-weight: 300; line-height: 32px; }
.view { flex: 1; display: flex; flex-direction: column; justify-content: center; padding-bottom: 8px; text-align: center; font-size: 47px; line-height: 65px; }
.measure { font-weight: 500; }
.value { font-weight: 300; }

/* Sheet tabs and status */
.sheet-tabs { display: flex; height: 38px; border: solid #c8c8c8; border-width: 1px 0; background: #e6e6e6; color: #555; font-weight: 300; }
.sheet-tabs a, .sheet-tabs button { display: flex; align-items: center; justify-content: center; gap: 5px; width: 70px; padding-right: 3px; border-right: 1px solid #c8c8c8; white-space: nowrap; }
.sheet-tabs .source { width: 163px; justify-content: flex-start; gap: 7px; padding-left: 10px; }
.sheet-tabs .wide { width: 76px; }
.sheet-tabs .dash { width: 124px; }
.sheet-tabs .story { width: 83px; }
.sheet-tabs button { width: 32px; padding: 0; }
.sheet-tabs .current { padding: 0; background: #fafafa; font-weight: 600; color: #444; }

.statusbar { display: flex; align-items: center; height: 26px; gap: 20px; padding-left: 3px; border-bottom: 1px solid #b5aba8; background: #ebebeb; font: 13px Roboto, sans-serif; }
.status-cells { display: flex; align-self: stretch; margin-left: auto; }
.cell { width: 157px; border-left: 1px solid #c8c8c8; }
.cell.small { width: 32px; }
.cell.mid { width: 57px; }
.pager, .modes { display: flex; align-items: center; color: #b8b8b8; }
.pager { width: 71px; padding-left: 7px; gap: 8px; }
.modes { width: 70px; padding-left: 8px; gap: 11px; }

/* Taskbar */
.taskbar {
  display: grid;
  grid-template-columns: 1fr auto 1fr;
  align-items: center;
  height: 60px;
  padding-bottom: 1px;
  font: 15px "Open Sans", "Noto Sans", sans-serif;
  color: #222;
  background: linear-gradient(90deg, #e5dec8, #e3e2c9 5%, #d9e8b6 9%, #dbe5b8 12%, #ebdcca 15%, #ecd9d0 20%, #efe4ab 23%, #efe3b4 26%, #f0dfcb 32%, #f0d9de 38%, #f3d6d4 46%, #efdad5 57%, #f4e4bf 65%, #f0dfd0 73%, #f1ded3 80%, #f8e4da 91%, #dde0dc 98%);
}
.weather { position: relative; display: flex; align-items: center; justify-self: start; gap: 5px; padding-left: 23px; text-align: left; }
.alert {
  position: absolute;
  left: 39px;
  top: -2px;
  width: 20px;
  height: 20px;
  border-radius: 50%;
  background: #c42b1c;
  color: #fff;
  font-size: 13px;
  line-height: 20px;
  text-align: center;
}
.forecast, .lang, .clock { display: flex; flex-direction: column; font-size: 14px; line-height: 20px; }
.forecast { font-family: "Noto Sans", sans-serif; }
.sky { color: #666; }
.apps { display: flex; align-items: center; }
.app { position: relative; display: grid; place-items: center; width: 55px; height: 50px; }
.task-search { display: flex; align-items: center; gap: 12px; width: 273px; height: 40px; margin: 0 3px 0 5px; padding: 0 14px; border: 1px solid #ded0c8; border-radius: 20px; background: #fcf6f1; }
.task-search input { flex: 1; min-width: 0; padding: 0; font-size: 16px; }
.task-search input::placeholder { color: #555; opacity: 1; }
.running::after, .active::after { content: ""; position: absolute; left: 24px; bottom: 0; width: 8px; height: 4px; border-radius: 2px; background: #857e79; }
.active::before { content: ""; position: absolute; inset: 0 5px 0 4px; border: 1px solid #f0e4d4; border-radius: 5px; background: #fbf3e8; }
.active::after { left: 18px; width: 20px; background: #00b7c3; }
.tile { position: relative; padding: 1px; background: #fff; border: 1px solid #ddd; }
.letter { fill: #fff; font: 700 13px "Open Sans", sans-serif; text-anchor: middle; }
.pdf { fill: #fff; font: 8px Inter, sans-serif; text-anchor: middle; }
.pdf-sub { fill: #fff; font: 4px Inter, sans-serif; text-anchor: middle; }
.tray { display: flex; align-items: center; justify-self: end; padding-right: 25px; }
.more { padding: 10px; }
.lang { width: 62px; align-items: center; margin-left: 1px; }
.quick { display: flex; align-items: center; gap: 10px; padding: 0 4px 0 7px; }
.clock { width: 92px; text-align: right; align-items: flex-end; margin-right: 10px; font-size: 15px; }
.count { width: 20px; height: 20px; border-radius: 50%; background: #00b7c3; color: #fff; font-size: 13px; line-height: 20px; text-align: center; }
```
